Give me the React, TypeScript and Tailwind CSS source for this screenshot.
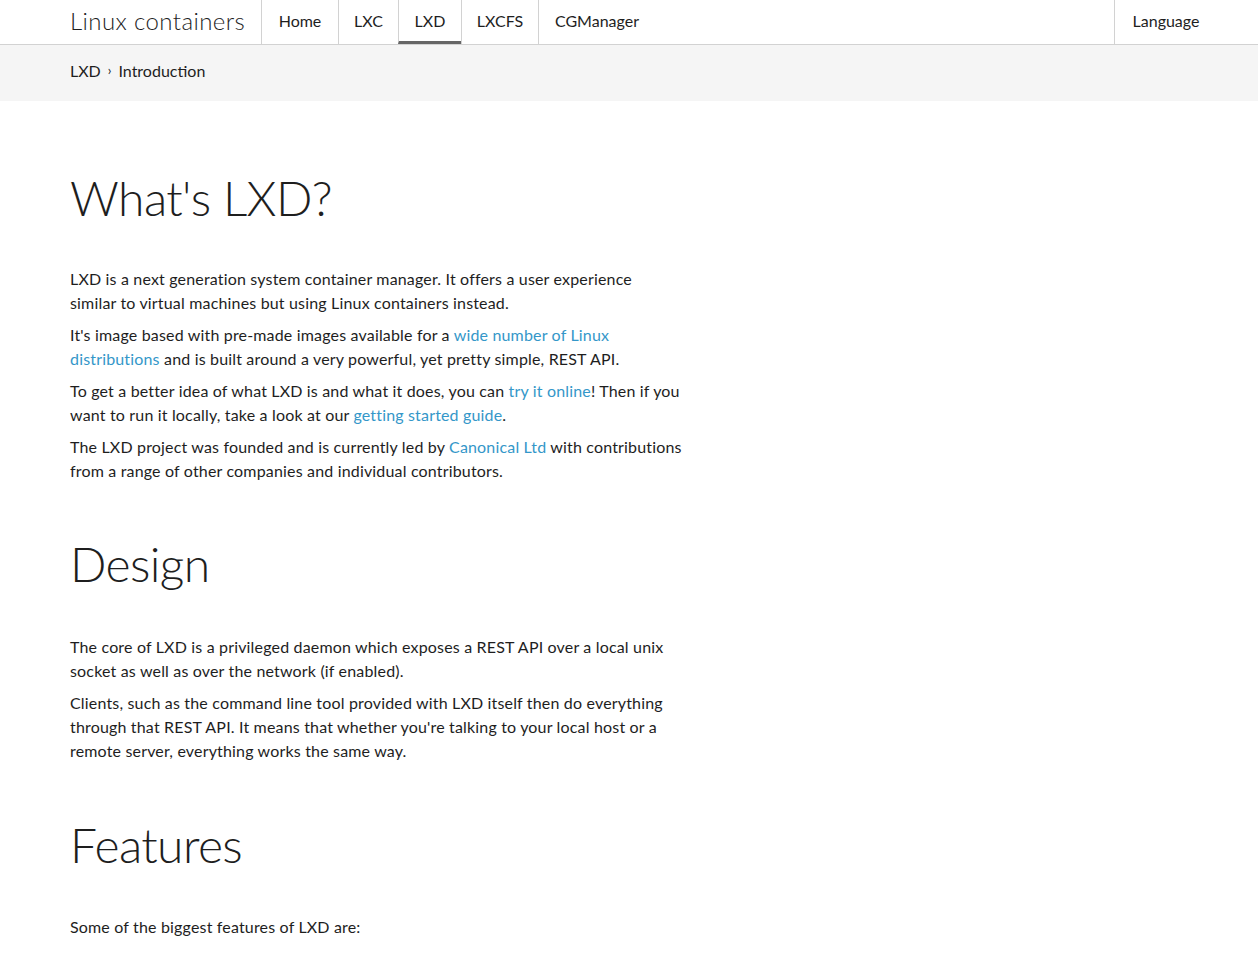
const link = "text-[#3497c9]";

function NavItem({ label, width, active }: { label: string; width: string; active?: boolean }) {
	return (
		<a
			className={
				width +
				" h-full flex items-center justify-center border-l border-[#d2d2d2] " +
				(active ? "border-b-[3px] border-b-[#666666] pt-[1px]" : "pb-[2px]")
			}
		>
			{label}
		</a>
	);
}

export default function App() {
	return (
		<div className="min-h-screen bg-white text-[#1e1e1e] font-['Lato','Liberation_Sans',sans-serif] text-base">
			<header className="h-[45px] border-b border-[#d2d2d2] flex pl-[70px] pr-[41px]">
				<div className="w-[191px] text-[24px] font-light tracking-[0.4px] flex items-center pb-[2px]">
					Linux containers
				</div>
				<nav className="flex h-full text-[16px]">
					<NavItem label="Home" width="w-[77px]" />
					<NavItem label="LXC" width="w-[60px]" />
					<NavItem label="LXD" width="w-[63px]" active />
					<NavItem label="LXCFS" width="w-[77px]" />
					<NavItem label="CGManager" width="w-[117px]" />
				</nav>
				<div className="ml-auto flex h-full">
					<NavItem label="Language" width="w-[103px]" />
				</div>
			</header>
			<div className="h-[56px] bg-[#f5f5f5] flex items-center pl-[70px] pb-[4px]">
				<span>LXD</span>
				<span className="mx-[7px] text-[13px]">›</span>
				<span>Introduction</span>
			</div>
			<main className="pl-[70px] pt-[68px] tracking-[0.17px]">
				<h1 className="text-[48px] font-light leading-[1.2] tracking-[-0.6px]">What's LXD?</h1>
				<div className="mt-[40px] flex flex-col gap-[8px] leading-[24px]">
					<p>
						LXD is a next generation system container manager. It offers a user experience
						<br />
						similar to virtual machines but using Linux containers instead.
					</p>
					<p>
						It's image based with pre-made images available for a{" "}
						<a className={link}>
							wide number of Linux
							<br />
							distributions
						</a>{" "}
						and is built around a very powerful, yet pretty simple, REST API.
					</p>
					<p>
						To get a better idea of what LXD is and what it does, you can{" "}
						<a className={link}>try it online</a>! Then if you
						<br />
						want to run it locally, take a look at our <a className={link}>getting started guide</a>.
					</p>
					<p>
						The LXD project was founded and is currently led by <a className={link}>Canonical Ltd</a> with
						contributions
						<br />
						from a range of other companies and individual contributors.
					</p>
				</div>
				<h2 className="mt-[52px] text-[48px] font-light leading-[1.2] tracking-[-0.6px]">Design</h2>
				<div className="mt-[43px] flex flex-col gap-[8px] leading-[24px]">
					<p>
						The core of LXD is a privileged daemon which exposes a REST API over a local unix
						<br />
						socket as well as over the network (if enabled).
					</p>
					<p>
						Clients, such as the command line tool provided with LXD itself then do everything
						<br />
						through that REST API. It means that whether you're talking to your local host or a
						<br />
						remote server, everything works the same way.
					</p>
				</div>
				<h2 className="mt-[53px] text-[48px] font-light leading-[1.2] tracking-[-0.6px]">Features</h2>
				<div className="mt-[41px] leading-[24px]">
					<p>Some of the biggest features of LXD are:</p>
				</div>
			</main>
		</div>
	);
}
